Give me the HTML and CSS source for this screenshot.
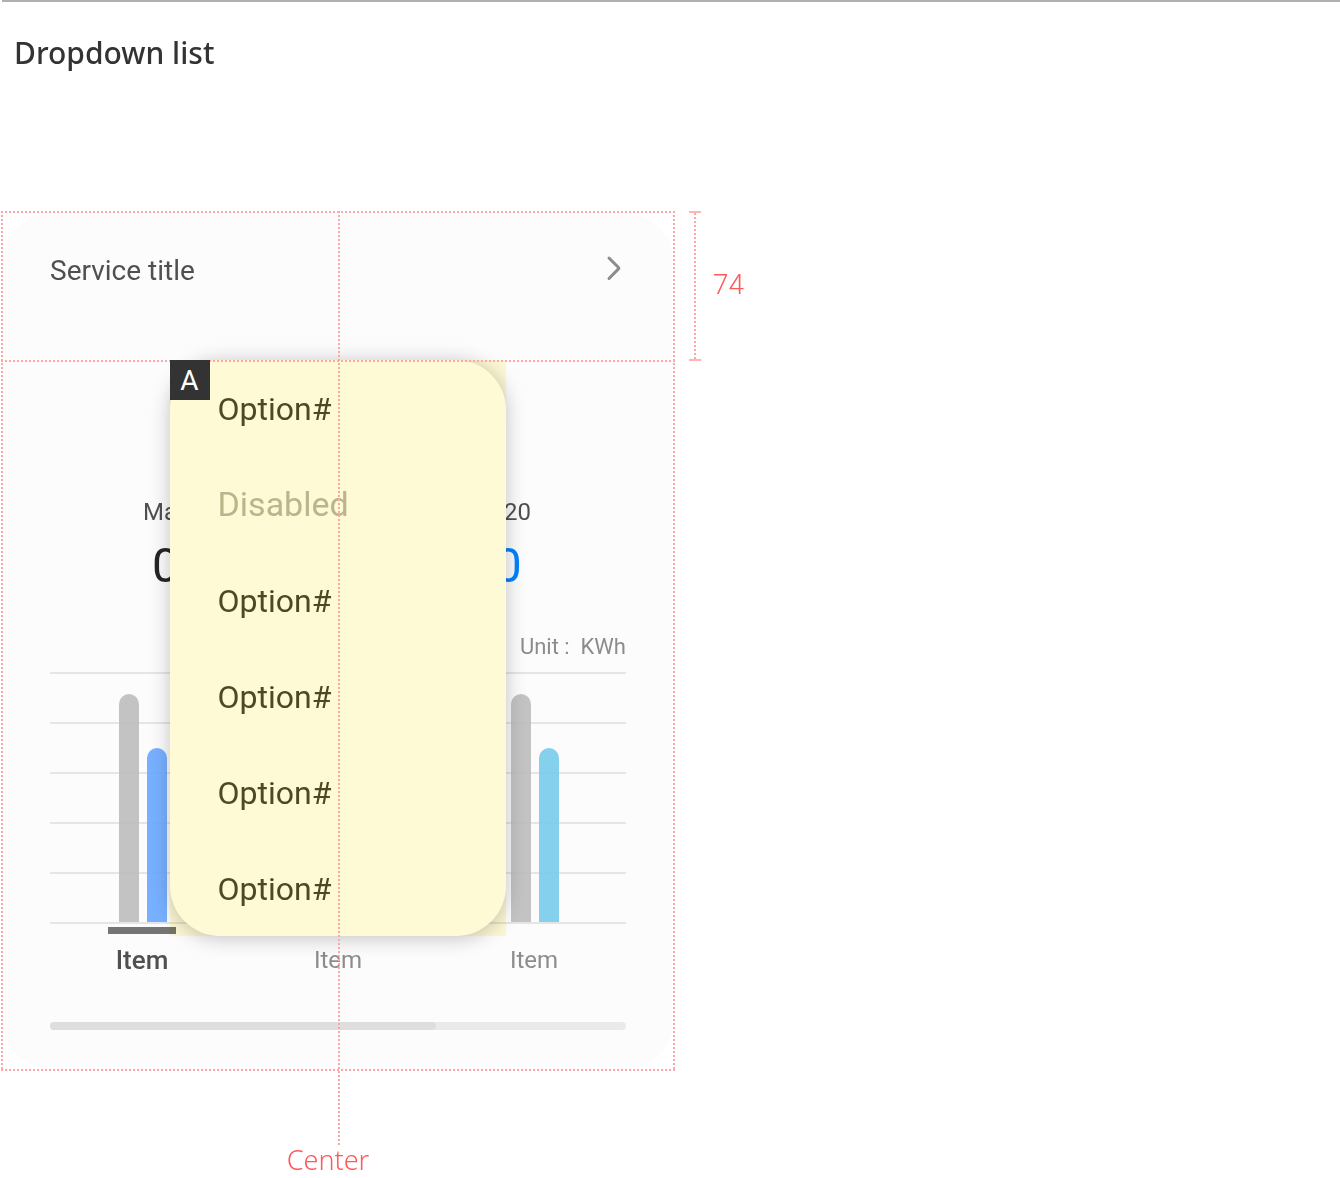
FILE: index.html
```html
<!DOCTYPE html>
<html lang="en">
<head>
<meta charset="utf-8">
<meta name="viewport" content="width=device-width, initial-scale=1">
<title>Dropdown list</title>
<link rel="stylesheet" href="styles.css">
</head>
<body>
<main class="page">
  <h1 class="page-title">Dropdown list</h1>

  <div class="spec">
    <figure class="board">
      <section class="card">
        <header class="card-header">
          <h2 class="card-title">Service title</h2>
          <button class="card-more" type="button" aria-label="Open service">
            <svg width="16" height="26" viewBox="0 0 16 26" fill="none" stroke="#8c8c8c" stroke-width="3" stroke-linecap="round" stroke-linejoin="round" aria-hidden="true"><path d="M3 3 L12.500 12.500 Q13.200 13.200 12.500 13.900 L3 23.500"/></svg>
          </button>
        </header>

        <div class="stats">
          <div class="stat">
            <span class="stat-date">May</span>
            <span class="stat-value">0</span>
          </div>
          <div class="stat stat-current">
            <span class="stat-date">Jun 2020</span>
            <span class="stat-value">000</span>
          </div>
        </div>

        <p class="unit">Unit :&nbsp; KWh</p>

        <div class="chart">
          <div class="bars"><i class="bar bar-tall"></i><i class="bar bar-short bar-blue"></i></div>
          <div class="bars"><i class="bar bar-tall"></i><i class="bar bar-short bar-blue"></i></div>
          <div class="bars"><i class="bar bar-tall"></i><i class="bar bar-short bar-sky"></i></div>
        </div>

        <div class="labels">
          <span class="label label-active">Item</span>
          <span class="label">Item</span>
          <span class="label">Item</span>
        </div>

        <div class="track"><div class="thumb"></div></div>
      </section>

      <div class="area">
        <ul class="menu">
          <li><button class="option" type="button">Option#</button></li>
          <li><button class="option" type="button" disabled>Disabled</button></li>
          <li><button class="option" type="button">Option#</button></li>
          <li><button class="option" type="button">Option#</button></li>
          <li><button class="option" type="button">Option#</button></li>
          <li><button class="option" type="button">Option#</button></li>
        </ul>
        <div class="tint"></div>
      </div>

      <div class="guide-frame"></div>
      <div class="guide-row"></div>
      <div class="guide-center"></div>
      <div class="area-overlay"><span class="badge">A</span></div>
    </figure>

    <div class="measure">
      <div class="measure-line"></div>
      <span class="measure-value">74</span>
    </div>

    <p class="center-label">Center</p>
  </div>
</main>
</body>
</html>
```

FILE: styles.css
```css
:root {
  --guide: #ffa6a6;
  --note: #ff5a5a;
  --dots-x: repeating-linear-gradient(to right, var(--guide) 0 2px, transparent 2px 4px);
  --dots-y: repeating-linear-gradient(to bottom, var(--guide) 0 2px, transparent 2px 4px);
}

* {
  box-sizing: border-box;
}

body {
  margin: 0;
  background: #fff;
  font-family: Roboto, "Liberation Sans", sans-serif;
}

h1, h2, p, ul, figure {
  margin: 0;
  padding: 0;
  font-weight: 400;
}

button {
  border: 0;
  padding: 0;
  background: none;
  font: inherit;
}

.page {
  padding-left: 1px;
}

.page-title {
  margin-left: 1px;
  border-top: 2px solid #b0b0b0;
  padding: 29px 12px 136px;
  color: #333;
  font: 500 30px/44px "Noto Sans", sans-serif;
}

.spec {
  display: grid;
  grid-template-columns: minmax(0, 674px) auto;
  justify-content: start;
}

.board {
  position: relative;
}

.card {
  margin: 1px;
  padding: 0 48px 40px;
  border-radius: 52px;
  background: #fcfcfc;
}

.card-header {
  display: flex;
  justify-content: space-between;
  align-items: flex-start;
  padding-top: 39px;
  height: 149px;
}

.card-title {
  color: #505050;
  font-size: 28px;
  line-height: 40px;
}

.card-more {
  margin: 4px 4px 0 0;
  height: 26px;
}

.card-more svg {
  display: block;
}

.stats {
  display: flex;
  justify-content: space-between;
  padding: 135px 95px 0 93px;
  text-align: center;
}

.stat {
  display: grid;
}

.stat-date {
  color: #505050;
  font-size: 24px;
  line-height: 32px;
}

.stat-value {
  color: #252525;
  font-size: 48px;
  line-height: 76px;
}

.stat-current .stat-value {
  color: #0381fe;
}

.unit {
  padding: 25px 0 7px;
  color: #8c8c8c;
  font-size: 22px;
  line-height: 36px;
  text-align: right;
}

.chart {
  display: flex;
  justify-content: space-between;
  align-items: flex-end;
  height: 252px;
  padding: 0 67px 2px 69px;
  background: repeating-linear-gradient(to bottom, #e5e5e5 0 2px, transparent 2px 50px);
}

.bars {
  display: flex;
  align-items: flex-end;
  gap: 8px;
}

.bar {
  width: 20px;
  border-radius: 10px 10px 0 0;
  background: #bdbdbd;
  opacity: .9;
}

.bar-tall {
  height: 228px;
}

.bar-short {
  height: 174px;
}

.bar-blue {
  background: #69a7ff;
}

.bar-sky {
  background: #78cbea;
}

.labels {
  display: flex;
  justify-content: space-between;
  padding: 3px 58px 0;
}

.label {
  width: 68px;
  border-top: 7px solid transparent;
  padding-top: 9px;
  color: #8c8c8c;
  font-size: 24px;
  line-height: 34px;
  text-align: center;
}

.label-active {
  border-color: #757575;
  color: #505050;
  font-size: 26px;
  font-weight: 500;
}

.track {
  margin-top: 45px;
  height: 8px;
  border-radius: 4px;
  background: #eaeaea;
}

.thumb {
  width: 67%;
  height: 8px;
  border-radius: 4px;
  background: #dedede;
}

/* Dropdown over the card, with its bounding area tinted */
.area,
.area-overlay {
  position: absolute;
  top: 149px;
  left: 25%;
  width: calc(50% - 1px);
}

.menu {
  border-radius: 50px;
  background: #fefefe;
  box-shadow: 0 2px 20px rgba(0, 0, 0, .24);
  list-style: none;
}

.option {
  display: block;
  width: 100%;
  height: 96px;
  padding: 0 48px;
  color: #4d4a2e;
  font-size: 32px;
  line-height: 98px;
  text-align: left;
}

.option:disabled {
  color: #bab8a4;
  font-size: 34px;
  line-height: 96px;
}

.tint {
  position: absolute;
  inset: 0;
  background: #fffbd7;
  mix-blend-mode: multiply;
}

.badge {
  display: block;
  width: 40px;
  height: 40px;
  background: #333;
  color: #fff;
  font-size: 28px;
  line-height: 42px;
  text-align: center;
}

/* Guides */
.guide-frame {
  position: absolute;
  inset: 0;
  background:
    var(--dots-x) top / 100% 2px no-repeat,
    var(--dots-x) bottom / 100% 2px no-repeat,
    var(--dots-y) left / 2px 100% no-repeat,
    var(--dots-y) right / 2px 100% no-repeat;
}

.guide-row {
  position: absolute;
  top: 149px;
  left: 0;
  right: 0;
  height: 2px;
  background: var(--dots-x);
}

.guide-center {
  position: absolute;
  top: 0;
  bottom: -74px;
  left: 50%;
  width: 2px;
  background: var(--dots-y);
}

.measure {
  display: flex;
  align-items: center;
  gap: 12px;
  height: 150px;
  margin-left: 14px;
}

.measure-line {
  width: 12px;
  height: 150px;
  border: solid #ffb5b5;
  border-width: 2px 0;
  background: var(--dots-y) center / 2px 100% no-repeat;
}

.measure-value {
  padding-bottom: 4px;
  color: var(--note);
  font-size: 28px;
  font-weight: 300;
}

.center-label {
  padding: 70px 20px 0 0;
  color: var(--note);
  font: 300 27px/38px "Noto Sans", sans-serif;
  text-align: center;
}
```
